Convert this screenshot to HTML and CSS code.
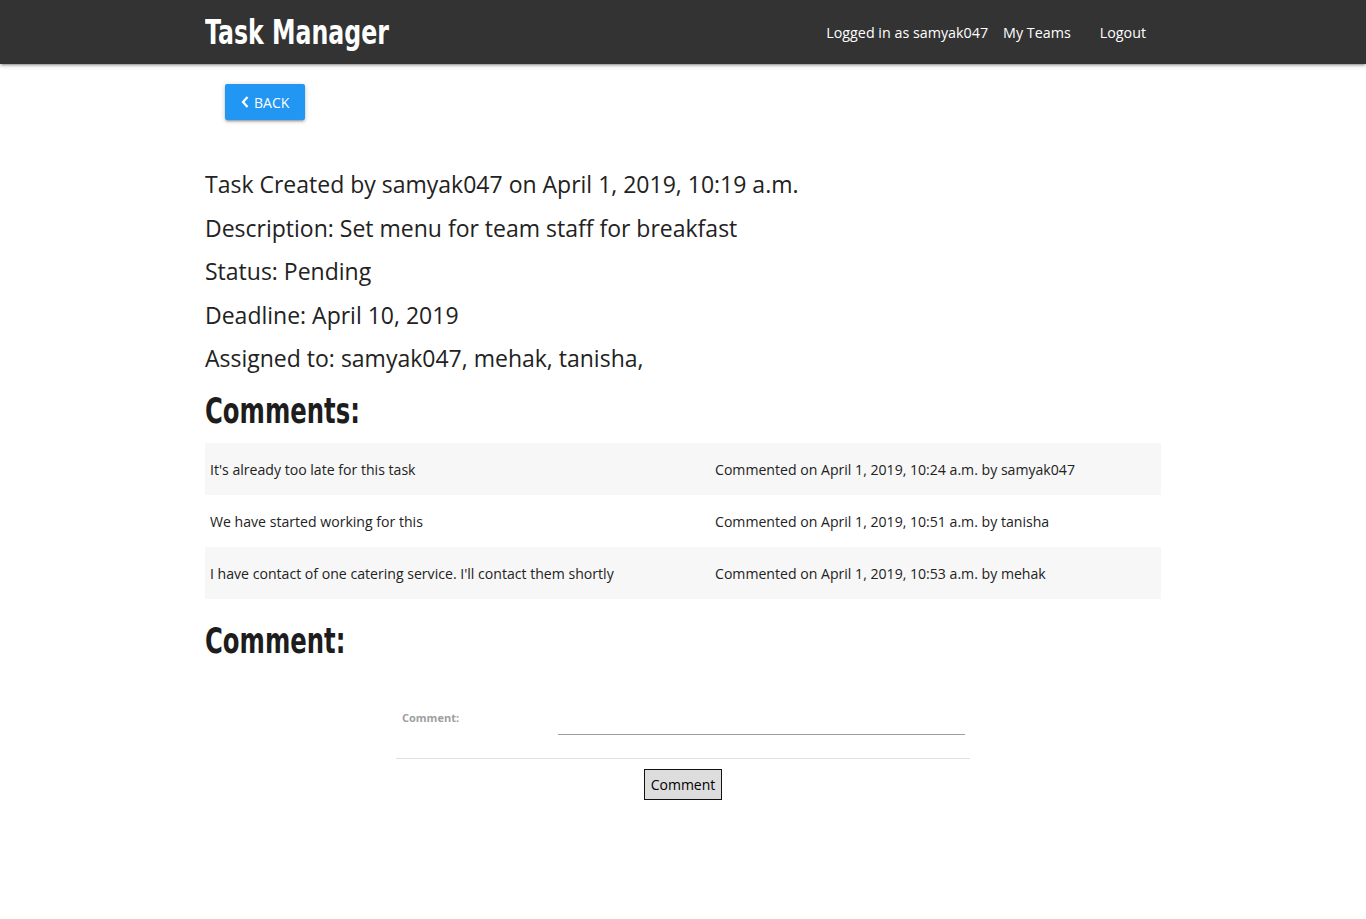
FILE: index.html
```html
<!DOCTYPE html>
<html>
<head>
<meta charset="utf-8">
<title>Task Manager</title>
<link rel="stylesheet" href="styles.css">
</head>
<body>
<nav class="nav">
  <div class="container nav-inner">
    <a class="brand" href="#"><span class="narrow">Task Manager</span></a>
    <ul class="nav-links">
      <li><a href="#">Logged in as samyak047</a></li>
      <li><a href="#">My Teams</a></li>
      <li><a href="#" class="logout">Logout</a></li>
    </ul>
  </div>
</nav>
<main class="container">
  <div class="back-row">
    <a class="btn" href="#"><svg class="chev" viewBox="0 0 8 12" width="8" height="12"><path d="M6.5 1 L2 6 L6.5 11" fill="none" stroke="#fff" stroke-width="2.2"/></svg>BACK</a>
  </div>
  <div class="details">
    <h5 class="line">Task Created by samyak047 on April 1, 2019, 10:19 a.m.</h5>
    <h5 class="line">Description: Set menu for team staff for breakfast</h5>
    <h5 class="line">Status: Pending</h5>
    <h5 class="line">Deadline: April 10, 2019</h5>
    <h5 class="line">Assigned to: samyak047, mehak, tanisha,</h5>
  </div>
  <h3 class="heading"><span class="narrow">Comments:</span></h3>
  <div class="table">
    <div class="row striped"><div class="cell c1">It's already too late for this task</div><div class="cell">Commented on April 1, 2019, 10:24 a.m. by samyak047</div></div>
    <div class="row"><div class="cell c1">We have started working for this</div><div class="cell">Commented on April 1, 2019, 10:51 a.m. by tanisha</div></div>
    <div class="row striped"><div class="cell c1">I have contact of one catering service. I'll contact them shortly</div><div class="cell">Commented on April 1, 2019, 10:53 a.m. by mehak</div></div>
  </div>
  <h3 class="heading heading2"><span class="narrow">Comment:</span></h3>
  <form class="form">
    <div class="field">
      <label class="label" for="c">Comment:</label>
      <input class="input" id="c" type="text">
    </div>
    <div class="submit-row"><button class="submit" type="button">Comment</button></div>
  </form>
</main>
</body>
</html>
```
FILE: styles.css
```css
* { box-sizing: border-box; }
body {
  margin: 0;
  font-family: "Open Sans", "Noto Sans", sans-serif;
  color: rgba(0,0,0,0.87);
  background: #fff;
}
.container {
  width: 956px;
  margin: 0 auto;
}
.nav {
  background: #333333;
  height: 64px;
  box-shadow: 0 2px 2px 0 rgba(0,0,0,0.14), 0 3px 1px -2px rgba(0,0,0,0.12), 0 1px 5px 0 rgba(0,0,0,0.2);
}
.nav-inner {
  display: flex;
  align-items: center;
  justify-content: space-between;
  height: 64px;
}
.narrow {
  display: inline-block;
  transform: scaleX(0.695);
  transform-origin: left center;
  white-space: nowrap;
}
.brand {
  font-family: "DejaVu Sans", sans-serif;
  font-weight: bold;
  font-size: 34px;
  line-height: 40px;
  color: #fff;
  text-decoration: none;
  width: 190px;
  margin-top: -1px;
}
.nav-links {
  list-style: none;
  margin: 0;
  padding: 0;
  display: flex;
  margin-right: 15px;
}
.nav-links a {
  color: #fff;
  text-decoration: none;
  font-size: 14.3px;
  padding: 0 7.5px;
}
.nav-links a.logout { padding-left: 21.5px; padding-right: 0; }
.back-row {
  padding: 20px 0 0 20px;
}
.btn {
  display: inline-flex;
  align-items: center;
  height: 36px;
  padding: 0 16px;
  background: #2196F3;
  color: #fff;
  text-decoration: none;
  font-size: 14px;
  border-radius: 2px;
  box-shadow: 0 2px 2px 0 rgba(0,0,0,0.14), 0 3px 1px -2px rgba(0,0,0,0.12), 0 1px 5px 0 rgba(0,0,0,0.2);
}
.chev { margin-right: 5px; }
.details { margin-top: 51px; }
.line {
  font-size: 23px;
  font-weight: 400;
  margin: 0 0 17.5px 0;
  line-height: 26px;
  color: #222;
}
.heading {
  font-family: "DejaVu Sans", sans-serif;
  font-weight: bold;
  font-size: 35px;
  line-height: 40px;
  margin: 20px 0 12px 0;
  color: #1d1d1d;
}
.table { display: flex; flex-direction: column; }
.row {
  display: grid;
  grid-template-columns: 505px 1fr;
  height: 52px;
  align-items: center;
  font-size: 14.1px;
  color: #222;
}
.row.striped { background: #f7f7f7; }
.cell { padding: 0 5px; }
.heading2 { margin-top: 22px; }
.form {
  width: 574px;
  margin: 36px auto 0;
}
.field {
  display: grid;
  grid-template-columns: 156px 1fr;
  padding: 0 5px 23px 6px;
  border-bottom: 1px solid #e0e0e0;
  align-items: end;
}
.label {
  font-size: 11px;
  font-weight: bold;
  color: #9e9e9e;
  align-self: start;
  padding-top: 13px;
}
.input {
  border: none;
  border-bottom: 1px solid #9e9e9e;
  height: 38px;
  outline: none;
  background: transparent;
  font-size: 15px;
}
.submit-row {
  display: flex;
  justify-content: center;
  padding-top: 10px;
}
.submit {
  font-family: "Open Sans", sans-serif;
  font-size: 14px;
  background: #dddddd;
  border: 1px solid #111;
  padding: 4px 6px;
  height: 31px;
  color: #000;
}
```
